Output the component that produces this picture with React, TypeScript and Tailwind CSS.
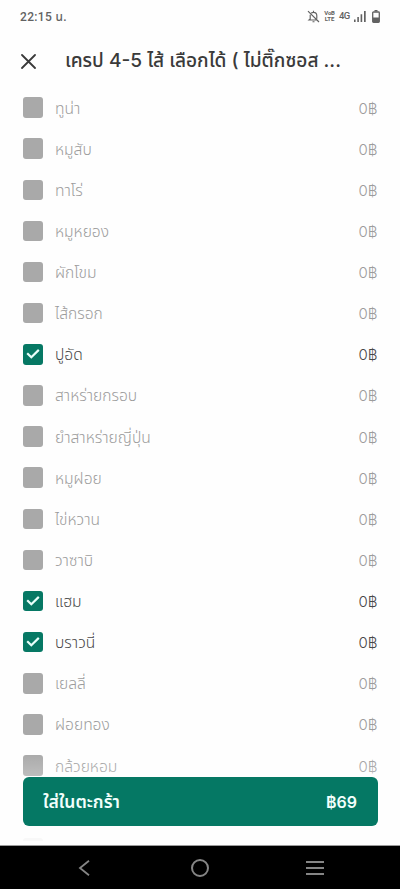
type Option = { name: string; checked?: boolean };

const options: Option[] = [
  { name: "ทูน่า" },
  { name: "หมูสับ" },
  { name: "ทาโร่" },
  { name: "หมูหยอง" },
  { name: "ผักโขม" },
  { name: "ไส้กรอก" },
  { name: "ปูอัด", checked: true },
  { name: "สาหร่ายกรอบ" },
  { name: "ยำสาหร่ายญี่ปุ่น" },
  { name: "หมูฝอย" },
  { name: "ไข่หวาน" },
  { name: "วาซาบิ" },
  { name: "แฮม", checked: true },
  { name: "บราวนี่", checked: true },
  { name: "เยลลี่" },
  { name: "ฝอยทอง" },
  { name: "กล้วยหอม" },
];

function StatusBar() {
  return (
    <div className="flex h-8 items-center justify-between px-[20px] text-[#626262]">
      <span className="pt-[1px] font-['Roboto','Noto_Sans_Thai',sans-serif] text-[12px] font-medium tracking-[0.35px]">22:15 น.</span>
      <div className="flex items-center">
        <svg className="mr-[4px] h-[13px] w-[13px]" viewBox="0 0 13 13" fill="none" stroke="currentColor" strokeWidth="1.15">
          <path d="M1 1.2 12 12M4.2 3.1C5 2.4 5.6 2.3 6.5 2.3c2 0 3.3 1.5 3.3 3.4v3M3.2 4.8v4.1L2 10h7.8M6.5.8v1.5M5.5 11.7h2" />
        </svg>
        <span className="mr-[4px] flex w-[11px] flex-col items-center font-['Roboto',sans-serif] text-[6px] leading-[6.5px] font-bold">
          <span className="tracking-[-0.2px]">VoB</span>
          <span>LTE</span>
        </span>
        <span className="mr-[4px] w-[11px] font-['Roboto',sans-serif] text-[9.5px] leading-none font-medium tracking-[-0.6px]">4G</span>
        <svg className="mr-[6px] h-[12px] w-[12px]" viewBox="0 0 12 12" fill="currentColor">
          <path d="M0 9.5h1.6V12H0zM3.3 7h1.6v5H3.3zM6.6 4.2h1.6V12H6.6zM10 1h1.7v11H10z" />
        </svg>
        <svg className="h-[13px] w-[8px]" viewBox="0 0 8 13">
          <path d="M2.5 0h3v1.5h-3z" fill="currentColor" />
          <rect x=".7" y="2" width="6.6" height="10.3" rx=".8" fill="none" stroke="currentColor" strokeWidth="1.3" />
          <path d="M1 7.5h6V12H1z" fill="currentColor" />
        </svg>
      </div>
    </div>
  );
}

function OptionRow({ name, checked }: Option) {
  return (
    <li className={`flex h-[41.13px] items-center ${checked ? "text-[#484848]" : "text-[#9c9c9c]"}`}>
      <span className={`flex h-[20.5px] w-[20.5px] items-center justify-center rounded-[3px] ${checked ? "bg-[#067864]" : "bg-[#a9a9a9]"}`}>
        {checked && (
          <svg className="h-[10px] w-[14px]" viewBox="0 0 14 10" fill="none" stroke="#e9fffb" strokeWidth="2.2">
            <path d="m1.2 4.2 4.1 4L12.8.9" />
          </svg>
        )}
      </span>
      <span className="ml-[12px] flex-1 pt-[2px] text-[15.6px] leading-6 font-light">{name}</span>
      <span className="pt-[2px] text-[15px] leading-6 font-light">0฿</span>
    </li>
  );
}

export default function App() {
  return (
    <div className="flex h-[889px] w-[400px] flex-col overflow-hidden bg-[#fefefe] font-['Inter','Noto_Sans_Thai','Noto_Sans',sans-serif]">
      <StatusBar />
      <header className="flex h-[55px] items-center pl-[21px] text-[#3a3a3a]">
        <svg className="mt-[3px] h-[15px] w-[15px]" viewBox="0 0 15 15" fill="none" stroke="currentColor" strokeWidth="1.8" strokeLinecap="round">
          <path d="m1 1 13 13M14 1 1 14" />
        </svg>
        <h1 className="mt-[1px] ml-[29px] text-[19.1px] font-medium whitespace-nowrap">เครป 4-5 ไส้ เลือกได้ ( ไม่ติ๊กซอส ...</h1>
      </header>
      <main className="relative h-[758px] shrink-0 overflow-hidden px-[22.5px]">
        <ul>
          {options.map((o) => (
            <OptionRow key={o.name} {...o} />
          ))}
        </ul>
        <div className="absolute inset-x-0 bottom-0 flex flex-col">
          <div className="h-[24px] bg-linear-to-b from-white/0 to-white/25" />
          <div className="bg-[#fefefe] px-[22.5px]">
            <button className="flex h-[49px] w-full items-center justify-between rounded-[6px] bg-[#057864] px-[20.5px] text-[#f2fffc]">
              <span className="pt-[1px] text-[17.5px] font-semibold">ใส่ในตะกร้า</span>
              <span className="text-[16px] font-semibold">฿69</span>
            </button>
            <div className="h-[19px] pt-[12px]">
              <div className="h-[3px] w-[20px] rounded-t-[3px] bg-[#f8f8f8]" />
            </div>
          </div>
        </div>
      </main>
      <nav className="flex h-[44px] shrink-0 items-center justify-between border-t border-[#9a9a9a] bg-black pr-[76px] pl-[78px] text-[#858585]">
        <svg className="h-[16px] w-[12px]" viewBox="0 0 12 16" fill="none" stroke="currentColor" strokeWidth="1.8">
          <path d="M11 .8 2 8l9 7.2" />
        </svg>
        <span className="ml-[4px] h-[18px] w-[18px] rounded-full border-2 border-current" />
        <span className="flex w-[18px] flex-col gap-[4px]">
          <span className="h-[2px] bg-current" />
          <span className="h-[2px] bg-current" />
          <span className="h-[2px] bg-current" />
        </span>
      </nav>
    </div>
  );
}
